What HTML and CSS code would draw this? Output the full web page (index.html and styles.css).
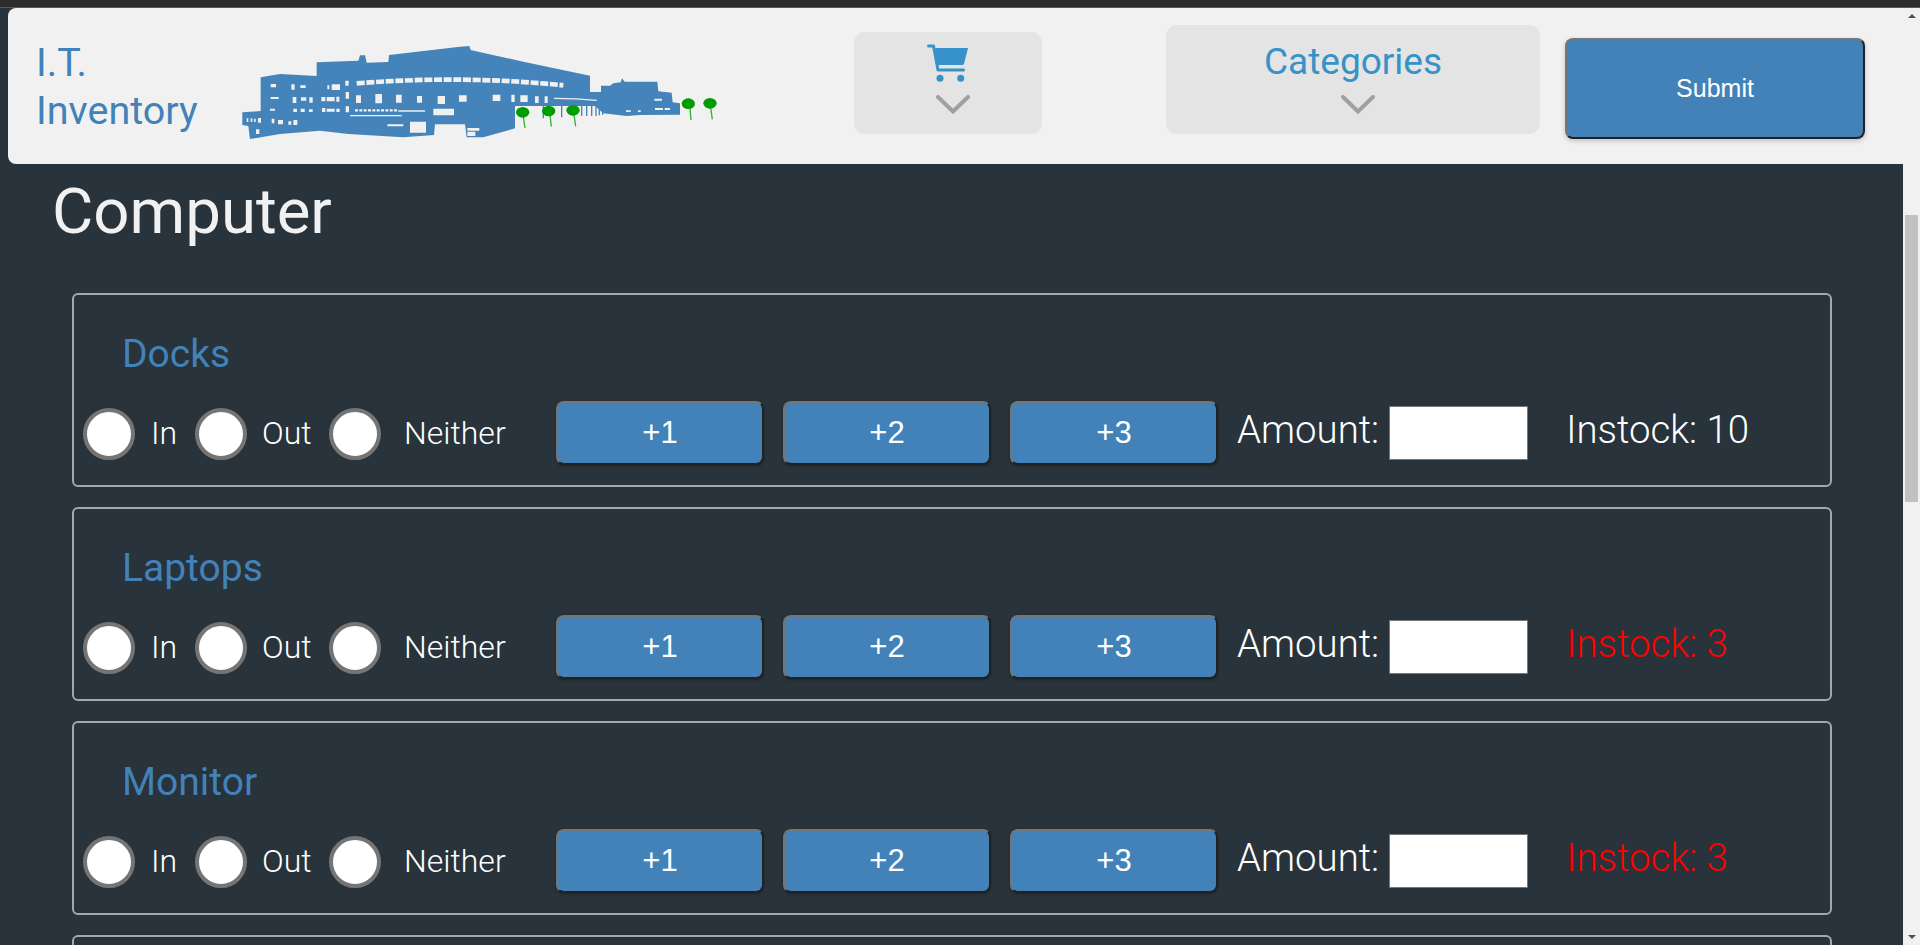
FILE: index.html
```html
<!DOCTYPE html>
<html lang="en">
<head>
    <meta charset="UTF-8">
    <title>I.T. Inventory</title>
    <link rel="stylesheet" href="styles.css">
</head>
<body>

    <div class="top-strip"></div>

    <!-- top bar -->
    <header class="navbar">
        <div class="brand">I.T.<br>Inventory</div>
        <svg class="logo" viewBox="0 0 1560 360">
            <g class="logo-art">
                <path class="building" d="M37 247 L92 243 L92 142 L150 132 L260 138 L260 97 L385 92 L390 76 L405 76 L410 98 L475 96 L477 75 L690 50 L718 48 L722 60 L745 65 L775 72 L880 95 L1080 137 L1080 186 L1113 186 L1113 167 L1140 167 L1150 160 L1172 157 L1176 145 L1184 155 L1282 155 L1285 184 L1325 188 L1328 217 L1350 220 L1350 254 L1230 255 L1190 258 L1120 250 L1095 228 L855 228 L855 295 L760 322 L710 322 L705 283 L615 283 L612 315 L520 322 L355 312 L270 302 L150 312 L60 327 L55 288 L37 285 Z"/>
                <path class="columns" d="M940 228V265M995 228V262M1055 228V258M1070 228V258M1085 228V258M1098 228V258M1108 228V256M1118 228V254"/>
                <path class="win-band" d="M380 160 Q700 135 1000 166"/>
                <path class="win-low" d="M375 241 H505"/>
                <path class="win-line" d="M505 243 H585 M360 257 H515 M972 205 Q1040 205 1100 211"/>
                <path class="windows" d="M122 162h16v10h-16z M184 163h10v16h-10z M211 166h16v8h-16z M292 166h6v12h-6z M305 163h25v17h-25z M346 152h10v15h-10z
                    M122 201h24v6h-24z M188 201h11v18h-11z M213 202h16v10h-16z M238 202h10v16h-10z M274 201h12v13h-12z M290 201h24v13h-24z M319 200h9v15h-9z M347 186h10v20h-10z
                    M120 236h15v6h-15z M190 236h11v10h-11z M212 236h12v10h-12z M237 238h11v8h-11z M276 234h10v12h-10z M290 236h24v9h-24z M319 236h10v10h-10z M347 229h10v18h-10z
                    M378 196h15v23h-15z M436 192h20v28h-20z M498 194h17v24h-17z M561 198h15v20h-15z M623 198h22v24h-22z M687 196h23v19h-23z M788 194h23v19h-23z M844 194h10v22h-10z M871 196h22v20h-22z M915 199h11v20h-11z M944 199h9v20h-9z
                    M610 236h62v20h-62z M540 275h48v33h-48z M472 283h48v6h-48z M712 294h36v8h-36z M712 305h24v13h-24z
                    M50 265h5v11h-5z M62 265h5v11h-5z M72 266h5v10h-5z M84 264h9v14h-9z M125 266h8v14h-8z M144 270h15v13h-15z M175 274h9v10h-9z M190 270h12v15h-12z M78 298h10v14h-10z
                    M1273 206h23v6h-23z M1275 234h24v6h-24z M1304 234h16v6h-16z M1188 241h14v5h-14z M1224 241h8v5h-8z"/>
                <path class="trunks" d="M880 260 L885 294 M960 255 L964 290 M1032 255 L1037 289 M1380 235 L1383 270 M1442 232 L1447 268"/>
                <ellipse class="crown" cx="878" cy="247" rx="20" ry="16"/>
                <ellipse class="crown" cx="956" cy="243" rx="20" ry="16"/>
                <ellipse class="crown" cx="1029" cy="241" rx="20" ry="16"/>
                <ellipse class="crown" cx="1375" cy="221" rx="20" ry="16"/>
                <ellipse class="crown" cx="1440" cy="220" rx="20" ry="16"/>
            </g>
        </svg>

        <div class="menu-box cart-box">
            <svg class="cart-icon" viewBox="0 0 42 38">
                <path class="cart-frame" d="M1.500 2 H6.500 L11 26 H36.500"/>
                <path d="M8 4 H41 L37 20 Q36.500 21 35 21 H11 Z"/>
                <circle cx="13" cy="34.300" r="3.500"/>
                <circle cx="33.700" cy="34.300" r="3.500"/>
            </svg>
            <svg class="chevron" viewBox="0 0 34 19"><path d="M2 2 L17 16.500 L32 2"/></svg>
        </div>

        <div class="menu-box categories-box">
            <span class="categories-label">Categories</span>
            <svg class="chevron" viewBox="0 0 34 19"><path d="M2 2 L17 16.500 L32 2"/></svg>
        </div>

        <button class="submit-btn" type="button">Submit</button>
        <span class="scroll-up"></span>
    </header>

    <div class="page">
        <main class="content">
            <h1 class="page-title">Computer</h1>

            <!-- Docks -->
            <section class="item-card">
                <h2 class="item-name">Docks</h2>
                <div class="item-row">
                    <input class="radio" type="radio" name="docks"><label class="radio-in">In</label>
                    <input class="radio" type="radio" name="docks"><label class="radio-out">Out</label>
                    <input class="radio" type="radio" name="docks"><label class="radio-neither">Neither</label>
                    <button class="add-btn" type="button">+1</button>
                    <button class="add-btn" type="button">+2</button>
                    <button class="add-btn" type="button">+3</button>
                    <span class="amount-label">Amount:</span>
                    <input class="amount-input" type="text">
                    <span class="stock">Instock: 10</span>
                </div>
            </section>

            <!-- Laptops -->
            <section class="item-card">
                <h2 class="item-name">Laptops</h2>
                <div class="item-row">
                    <input class="radio" type="radio" name="laptops"><label class="radio-in">In</label>
                    <input class="radio" type="radio" name="laptops"><label class="radio-out">Out</label>
                    <input class="radio" type="radio" name="laptops"><label class="radio-neither">Neither</label>
                    <button class="add-btn" type="button">+1</button>
                    <button class="add-btn" type="button">+2</button>
                    <button class="add-btn" type="button">+3</button>
                    <span class="amount-label">Amount:</span>
                    <input class="amount-input" type="text">
                    <span class="stock low">Instock: 3</span>
                </div>
            </section>

            <!-- Monitor -->
            <section class="item-card">
                <h2 class="item-name">Monitor</h2>
                <div class="item-row">
                    <input class="radio" type="radio" name="monitor"><label class="radio-in">In</label>
                    <input class="radio" type="radio" name="monitor"><label class="radio-out">Out</label>
                    <input class="radio" type="radio" name="monitor"><label class="radio-neither">Neither</label>
                    <button class="add-btn" type="button">+1</button>
                    <button class="add-btn" type="button">+2</button>
                    <button class="add-btn" type="button">+3</button>
                    <span class="amount-label">Amount:</span>
                    <input class="amount-input" type="text">
                    <span class="stock low">Instock: 3</span>
                </div>
            </section>

            <section class="item-card"></section>
        </main>

        <div class="scrollbar">
            <div class="scroll-thumb"></div>
            <span class="scroll-down"></span>
        </div>
    </div>

</body>
</html>
```

FILE: styles.css
```css
/* page */
html, body {
    height: 100%;
}

body {
    margin: 0;
    overflow: hidden;
    display: flex;
    flex-direction: column;
    background-color: #28333b;
    font-family: Roboto, "Liberation Sans", sans-serif;
    font-weight: 300;
    color: #ffffff;
}

.top-strip {
    height: 7px;
    flex: none;
    background-color: #2d2d2d;
    border-bottom: 1px solid #5a5a5a;
}

/* top bar */
.navbar {
    position: relative;
    flex: none;
    height: 156px;
    margin-left: 8px;
    display: flex;
    background-color: #f1f1f1;
    border-radius: 8px 0 0 8px;
}

.brand {
    width: 194px;
    margin: 31px 0 0 28px;
    font-size: 39.500px;
    font-weight: 400;
    line-height: 48px;
    color: #4282b8;
}

.logo {
    width: 520px;
    height: 120px;
    margin-top: 22px;
}

.building { fill: #4484bb; }
.columns { fill: none; stroke: #4484bb; stroke-width: 4; }
.windows { fill: #f0f0f0; }
.win-band { fill: none; stroke: #f0f0f0; stroke-width: 14; stroke-dasharray: 24 5; }
.win-low { fill: none; stroke: #f0f0f0; stroke-width: 7; stroke-dasharray: 9 4; }
.win-line { fill: none; stroke: #f0f0f0; stroke-width: 4; }
.trunks { fill: none; stroke: #2fb52f; stroke-width: 4; }
.crown { fill: #009c00; }
.logo-art { filter: blur(1.5px); }

.menu-box {
    display: flex;
    flex-direction: column;
    align-items: center;
    background-color: #e4e4e4;
    border-radius: 11px;
}

.cart-box {
    width: 188px;
    height: 102px;
    margin: 24px 0 0 104px;
}

.cart-icon {
    width: 42px;
    height: 38px;
    margin-top: 12px;
    fill: #3692c8;
}

.cart-frame {
    fill: none;
    stroke: #3692c8;
    stroke-width: 3;
    stroke-linecap: round;
    stroke-linejoin: round;
}

.chevron {
    width: 34px;
    height: 19px;
    fill: none;
    stroke: #a0a0a0;
    stroke-width: 4;
    stroke-linecap: round;
}

.cart-box .chevron {
    margin: 13px 0 0 10px;
}

.categories-box {
    width: 374px;
    height: 109px;
    margin: 17px 0 0 124px;
}

.categories-label {
    margin-top: 13px;
    font-size: 37px;
    font-weight: 400;
    line-height: 48px;
    color: #3692c8;
}

.categories-box .chevron {
    margin: 9px 0 0 10px;
}

.submit-btn {
    width: 300px;
    height: 101px;
    margin: 30px 0 0 25px;
    background-color: #4282b8;
    color: #ffffff;
    font-family: "Liberation Sans", Arial, sans-serif;
    font-size: 25px;
    border: 2px solid;
    border-color: #767676 #222222 #222222 #767676;
    border-radius: 8px;
    box-shadow: 0 2px 5px rgba(0,0,0,0.2);
}

.scroll-up {
    position: absolute;
    top: 6px;
    right: 4px;
    border-left: 4px solid transparent;
    border-right: 4px solid transparent;
    border-bottom: 4px solid #505050;
}

/* main part */
.page {
    flex: 1;
    min-height: 0;
    display: flex;
}

.content {
    flex: 1;
    min-width: 0;
    padding: 10px 71px 0 53px;
}

.page-title {
    margin: 0 0 43px -1px;
    font-size: 63.500px;
    font-weight: 400;
    line-height: 76px;
    color: #f1f1f1;
}

.item-card {
    height: 190px;
    margin: 0 0 20px 19px;
    border: 2px solid #a5a8ab;
    border-radius: 6px;
}

.item-name {
    margin: 37px 0 0 48px;
    font-size: 39px;
    font-weight: 400;
    line-height: 44px;
    color: #4282b8;
}

.item-row {
    display: flex;
    align-items: center;
    margin: 25px 0 0 9px;
    height: 64px;
}

.radio {
    appearance: none;
    flex: none;
    width: 52px;
    height: 52px;
    margin: 2px 0 0;
    background-color: #ffffff;
    border: 4px solid #757575;
    border-radius: 50%;
}

.radio-in,
.radio-out,
.radio-neither {
    box-sizing: border-box;
    flex: none;
    font-size: 32px;
}

.radio-in { width: 60px; padding-left: 16px; }
.radio-out { width: 82px; padding-left: 15px; }
.radio-neither { width: 175px; padding-left: 23px; }

.add-btn {
    flex: none;
    width: 208px;
    height: 64px;
    margin-right: 19px;
    background-color: #4282b8;
    color: #ffffff;
    font-family: "Liberation Sans", Arial, sans-serif;
    font-size: 31px;
    border: 2px solid;
    border-color: #767676 #222222 #222222 #767676;
    border-radius: 8px;
    box-shadow: 0 1px 3px rgba(0,0,0,0.3);
}

.amount-label {
    font-size: 38.400px;
    margin-bottom: 8px;
}

.amount-input {
    flex: none;
    box-sizing: border-box;
    width: 139px;
    height: 54px;
    margin: 0 38px 1px 10px;
    background-color: #ffffff;
    border: 1px solid #767676;
}

.stock {
    font-size: 38.400px;
    margin-bottom: 8px;
}

.stock.low {
    color: #ff0000;
}

/* scrollbar */
.scrollbar {
    position: relative;
    flex: none;
    width: 17px;
    background-color: #f1f1f1;
}

.scroll-thumb {
    width: 13px;
    height: 287px;
    margin: 51px 2px 0;
    background-color: #c1c1c1;
}

.scroll-down {
    position: absolute;
    bottom: 6px;
    right: 4px;
    border-left: 4px solid transparent;
    border-right: 4px solid transparent;
    border-top: 4px solid #505050;
}
```
